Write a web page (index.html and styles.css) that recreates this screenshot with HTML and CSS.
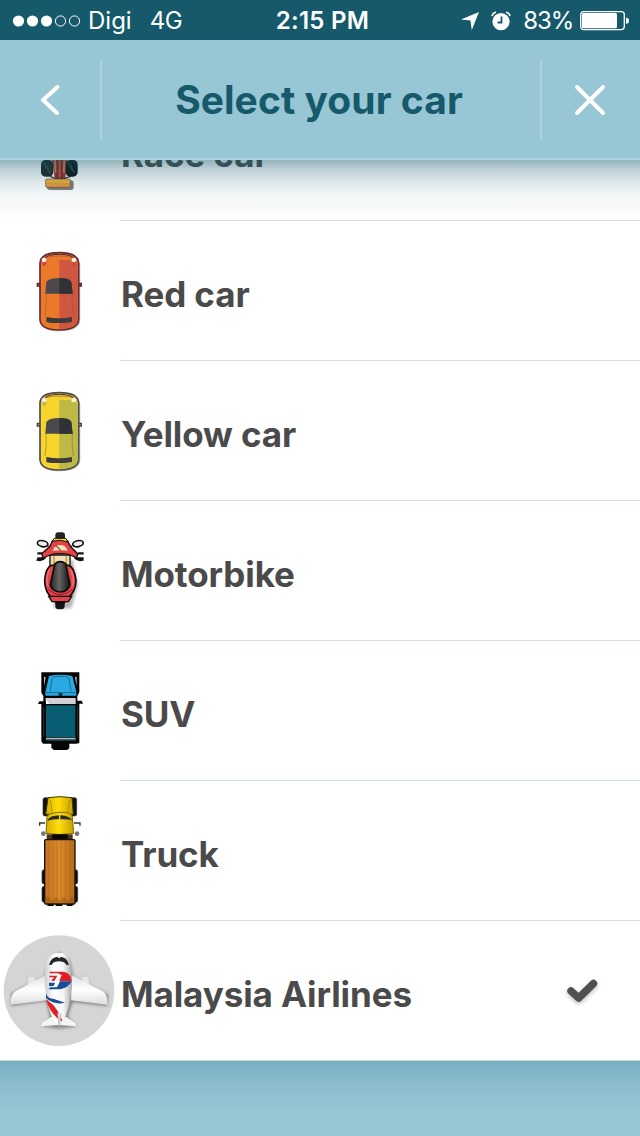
FILE: index.html
```html
<!DOCTYPE html>
<html lang="en">
<head>
  <meta charset="UTF-8" />
  <meta name="viewport" content="width=device-width, initial-scale=1.0"/>
  <title>Select your car</title>
  <link rel="stylesheet" href="styles.css">
</head>
<body>

  <div class="status">
    <div class="status-left">
      <svg class="signal" width="69" height="12" viewBox="0 0 69 12">
        <g fill="#fff"><circle cx="6.500" cy="6" r="5.6"/><circle cx="20.500" cy="6" r="5.6"/><circle cx="34.500" cy="6" r="5.6"/></g>
        <g fill="none" stroke="#fff"><circle cx="48.500" cy="6" r="5.1"/><circle cx="62.500" cy="6" r="5.1"/></g>
      </svg>
      <span class="carrier">Digi</span>
      <span class="network">4G</span>
    </div>
    <div class="clock">2:15 PM</div>
    <div class="status-right">
      <svg width="18" height="18" viewBox="0 0 18 18"><path d="M18 0 10.8 18 9.4 8.6 0 7.6Z" fill="#fff"/></svg>
      <svg class="alarm" width="20" height="20" viewBox="0 0 20 20">
        <circle cx="10" cy="10.6" r="8.6" fill="#fff"/>
        <path d="M1 5.2Q1.500 1.800 5 1.200M19 5.200Q18.500 1.800 15 1.200" fill="none" stroke="#fff" stroke-width="1.600"/>
        <path d="M10.500 5.500V11.500H6.500" fill="none" stroke="#15596b" stroke-width="1.800"/>
      </svg>
      <span class="percent">83%</span>
      <svg width="49" height="20" viewBox="0 0 49 20">
        <rect x=".7" y=".7" width="43.600" height="17.900" rx="3" fill="none" stroke="#fff" stroke-width="1.300"/>
        <rect x="2" y="2" width="35" height="15.300" rx="1.500" fill="#fff"/>
        <path d="M46 6.500Q49 7 49 9.700T46 13Z" fill="#fff"/>
      </svg>
    </div>
  </div>

  <header>
    <button class="nav-btn back" aria-label="Back">
      <svg width="20" height="32" viewBox="0 0 20 32"><path d="M17.500 3 3 16 17 29" fill="none" stroke="#fff" stroke-width="4" stroke-linecap="round" stroke-linejoin="round"/></svg>
    </button>
    <h1>Select your car</h1>
    <button class="nav-btn close" aria-label="Close">
      <svg width="32" height="32" viewBox="0 0 32 32"><path d="M3 3 29 29M29 3 3 29" stroke="#fff" stroke-width="4" stroke-linecap="round"/></svg>
    </button>
  </header>

  <main class="list">
    <div class="row">
      <svg class="icon" viewBox="0 -147 360 417">
        <rect x="141" y="151" width="80" height="29" rx="8" fill="#555" opacity=".75"/>
        <path d="M152 60H206L196 146H164Z" fill="#b0302a"/>
        <path d="M163 60 167 128M195 60 191 128" stroke="#ee7c2c" stroke-width="6"/>
        <path d="M172 70V145M186 70V145" stroke="#6b2140" stroke-width="4"/>
        <path d="M179 70V145" stroke="#dd4a22" stroke-width="5"/>
        <path d="M150 139 165 145H194L212 139" fill="none" stroke="#333" stroke-width="4"/>
        <rect x="123" y="90" width="37" height="50" rx="14" fill="#1c2426"/>
        <rect x="197" y="90" width="36" height="50" rx="14" fill="#0a1214"/>
        <path d="M134 102 150 128M208 102 222 126" stroke="#48575b" stroke-width="6" stroke-linecap="round" opacity=".6"/>
        <rect x="137" y="147" width="74" height="25" rx="4" fill="#ea9a38" stroke="#6b4630" stroke-width="2"/>
        <rect x="139" y="149" width="70" height="9" fill="#f0b13f"/>
      </svg>
      <span class="name">Race car</span>
    </div>

    <div class="row">
      <svg class="icon" viewBox="-60 -57 360 417">
        <use href="#car-shadow"/>
        <path d="M52 130H63V138H52ZM173 130H184V138H173Z" fill="#a64b48" stroke="#562431" stroke-width="4"/>
        <path d="M60 70Q61 38 118 38T176 70V238Q175 269 118 270T60 238Z" fill="#ec7829" stroke="#682b37" stroke-width="5"/>
        <path d="M118 41Q172 42 173 70V238Q172 266 118 267Z" fill="#cf5740"/>
        <path d="M118 60H151L160 76 171 72V62Q160 42 118 42Z" fill="#ec7829"/>
        <path d="M65 64 79 65Q80 76 70 78ZM171 64 157 65Q156 76 166 78Z" fill="#d33e38"/>
        <g id="car-details">
          <path d="M72 57Q81 43 118 43T164 57" fill="none" stroke="#443139" stroke-width="3"/>
          <path d="M77 53Q92 48 118 48T159 53" fill="none" stroke="#a35c33" stroke-width="2"/>
          <circle cx="72" cy="60" r="7" fill="#f5f2ed"/><circle cx="162" cy="60" r="7" fill="#f5f2ed"/>
          <path d="M78 158Q81 190 75 228M157 158Q154 190 160 228" fill="none" stroke="#7a5a24" stroke-width="2" opacity=".7"/>
          <path d="M76 161 79 126Q86 114 118 114T154 126L158 161Z" fill="#4b494b"/>
          <path d="M118 114Q149 114 154 126L158 161H118Z" fill="#323135"/>
          <path d="M79 231Q118 239 156 231V245Q152 248 118 249T79 245Z" fill="#3e3b3d"/>
        </g>
        <defs><path id="car-shadow" d="M65 76Q65 47 120 46T181 76V240Q180 272 123 274T64 242Z" fill="#555" opacity=".35"/></defs>
      </svg>
      <span class="name">Red car</span>
    </div>

    <div class="row">
      <svg class="icon" viewBox="-60 -57 360 417">
        <use href="#car-shadow"/>
        <path d="M52 130H63V138H52ZM173 130H184V138H173Z" fill="#bba83b" stroke="#45444a" stroke-width="4"/>
        <path d="M60 70Q61 38 118 38T176 70V238Q175 269 118 270T60 238Z" fill="#f5d52c" stroke="#4b4b52" stroke-width="5"/>
        <path d="M118 41Q172 42 173 70V238Q172 266 118 267Z" fill="#bcb947"/>
        <path d="M118 60H151L160 76 171 72V62Q160 42 118 42Z" fill="#f1d12f"/>
        <path d="M65 64 79 65Q80 76 70 78ZM171 64 157 65Q156 76 166 78Z" fill="#bbb64c"/>
        <use href="#car-details"/>
      </svg>
      <span class="name">Yellow car</span>
    </div>

    <div class="row">
      <svg class="icon" viewBox="-60 -57 360 417">
        <defs>
          <linearGradient id="seat"><stop offset="0" stop-color="#222"/><stop offset=".45" stop-color="#666"/><stop offset="1" stop-color="#111"/></linearGradient>
          <filter id="soft" x="-30%" y="-30%" width="160%" height="160%"><feGaussianBlur stdDeviation="5"/></filter>
        </defs>
        <path d="M90 120H158L174 195 154 265H103Z" fill="#777" opacity=".55" filter="url(#soft)"/>
        <rect x="106" y="37" width="29" height="35" rx="9" fill="#222"/>
        <rect x="106" y="235" width="28" height="33" rx="10" fill="#151515"/>
        <path d="M90 105H150V149H90Z" fill="#efe0b6" stroke="#111" stroke-width="4"/>
        <path d="M102 109V139M139 109V139" stroke="#d49c48" stroke-width="5"/>
        <path d="M86 77 98 87M155 77 143 87" stroke="#111" stroke-width="4"/>
        <ellipse cx="68" cy="71" rx="16" ry="9" transform="rotate(12 68 71)" fill="#eee" stroke="#111" stroke-width="5"/>
        <ellipse cx="174" cy="71" rx="16" ry="9" transform="rotate(-12 174 71)" fill="#eee" stroke="#111" stroke-width="5"/>
        <path d="M52 100H67M174 100H191M52 115H72M170 115H191" stroke="#161616" stroke-width="7"/>
        <path d="M50 118Q65 124 76 112M190 118Q174 124 164 112" fill="none" stroke="#111" stroke-width="7"/>
        <path d="M97 63Q120 50 143 63L151 79 173 101 170 114Q145 99 120 101 96 99 69 115L65 101 90 79Z" fill="#e74045" stroke="#17110f" stroke-width="4"/>
        <path d="M96 64 103 55H137L145 66Q120 57 96 64Z" fill="#eadf20" stroke="#111" stroke-width="3"/>
        <path d="M98 92Q104 75 121 75T143 92Q120 89 98 92Z" fill="#efe0bc"/>
        <path d="M108 77 122 91" stroke="#111" stroke-width="3"/>
        <path d="M95 136Q77 142 74 181 74 219 99 236L108 248H133L142 236Q168 216 168 181 163 141 146 136Z" fill="#e54249" stroke="#100c0b" stroke-width="5"/>
        <path d="M89 148Q75 174 83 198M151 148Q165 174 158 198" fill="none" stroke="#f26b6e" stroke-width="5"/>
        <path d="M105 131Q120 119 137 131L150 194Q144 214 121 216 94 214 91 194Z" fill="url(#seat)" stroke="#0a0a0a" stroke-width="5"/>
        <path d="M85 208Q120 240 157 208" fill="none" stroke="#8d1e29" stroke-width="3"/>
        <path d="M86 229H155L145 245H96Z" fill="#e54249" stroke="#100c0b" stroke-width="4"/>
      </svg>
      <span class="name">Motorbike</span>
    </div>

    <div class="row">
      <svg class="icon" viewBox="-60 -57 360 417">
        <path d="M64 37H178V96L172 109V122H185L189 131H178V249L169 251H148V265L141 270H101L94 263V251H69L64 244V132H54L58 124H70V108L64 98Z" fill="#050505"/>
        <path d="M77 52 72 78V50ZM165 52 170 78V50Z" fill="#b9c4c8"/>
        <path d="M87 48Q120 40 157 48L169 96V107H76V97Z" fill="#2baae2"/>
        <path d="M91 94 96 57Q98 50 108 49H134Q144 50 147 57L153 94" fill="none" stroke="#176c94" stroke-width="3"/>
        <path d="M76 98H169" stroke="#126b92" stroke-width="3"/>
        <rect x="116" y="99" width="11" height="9" fill="#063345"/>
        <path d="M76 114H167V132H87Z" fill="#d0cfd1"/>
        <path d="M77 115 89 132H78Z" fill="#fff"/>
        <rect x="78" y="136" width="88" height="96" fill="#085d72"/>
        <path d="M71 140V230M173 140V230" stroke="#3a4244" stroke-width="2"/>
        <path d="M78 236H167" stroke="#b0b8ba" stroke-width="5"/>
        <path d="M78 241H167" stroke="#0e4c60" stroke-width="3"/>
      </svg>
      <span class="name">SUV</span>
    </div>

    <div class="row">
      <svg class="icon" viewBox="-60 -27 360 417">
        <defs>
          <linearGradient id="cargo"><stop offset="0" stop-color="#c0751f"/><stop offset=".5" stop-color="#dc8a2a"/><stop offset="1" stop-color="#b5681c"/></linearGradient>
          <linearGradient id="cab"><stop offset="0" stop-color="#d7ae00"/><stop offset=".45" stop-color="#ffde08"/><stop offset="1" stop-color="#c7a000"/></linearGradient>
        </defs>
        <g fill="#111" stroke="#333" stroke-width="2">
          <rect x="69" y="23" width="18" height="55" rx="6"/><rect x="150" y="23" width="20" height="55" rx="6"/>
          <rect x="66" y="239" width="15" height="43" rx="6"/><rect x="159" y="239" width="14" height="43" rx="6"/>
          <rect x="66" y="289" width="15" height="48" rx="6"/><rect x="159" y="289" width="14" height="48" rx="6"/>
        </g>
        <path d="M84 23Q120 17 156 23L160 73H77Z" fill="url(#cab)" stroke="#3d3400" stroke-width="3"/>
        <path d="M91 30 97 70M149 30 142 70" stroke="#b59600" stroke-width="3"/>
        <path d="M81 80Q84 69 120 67T157 80L161 130Q120 137 78 130Z" fill="url(#cab)" stroke="#806900" stroke-width="3"/>
        <path d="M83 90Q90 77 117 76V88Q98 86 83 92ZM121 76Q148 77 156 91 142 86 121 88Z" fill="#292a2a"/>
        <path d="M101 98H137" stroke="#e6d77b" stroke-width="2"/>
        <path d="M59 107V99H75M180 107V99H162" fill="none" stroke="#333" stroke-width="4"/>
        <circle cx="70" cy="131" r="7" fill="#777"/><circle cx="171" cy="131" r="7" fill="#777"/>
        <rect x="80" y="133" width="78" height="16" fill="#46301c"/>
        <rect x="97" y="133" width="46" height="15" fill="#080808"/>
        <path d="M82 341H101V348H82ZM107 341H127V348H107ZM140 341H158V348H140Z" fill="#080808"/>
        <rect x="74" y="149" width="91" height="193" rx="3" fill="url(#cargo)" stroke="#17120b" stroke-width="4"/>
        <path d="M87 157V325M99 153V335M111 153V335M123 153V335M136 153V335M149 157V325" stroke="#b06a1e" stroke-width="2"/>
        <path d="M78 325Q84 313 90 325T102 327 114 327 126 327 138 327 150 325 161 324V339H78Z" fill="#7e430f" opacity=".35"/>
      </svg>
      <span class="name">Truck</span>
    </div>

    <div class="row">
      <svg class="icon" viewBox="0 -27 360 417">
        <defs>
          <linearGradient id="body"><stop offset="0" stop-color="#ccc"/><stop offset=".35" stop-color="#fff"/><stop offset=".7" stop-color="#f4f4f4"/><stop offset="1" stop-color="#aaa"/></linearGradient>
          <linearGradient id="wing" x2="0" y2="1"><stop offset="0" stop-color="#e2e2e2"/><stop offset=".5" stop-color="#fff"/><stop offset="1" stop-color="#ddd"/></linearGradient>
        </defs>
        <circle cx="177" cy="182" r="166" fill="#d5d5d5"/>
        <path d="M34 190 132 140 145 92 177 65 210 93 220 140 325 194 322 228 218 217 204 260 230 289 178 296 126 289 150 262 138 214 32 228Z" fill="#555" opacity=".6" filter="url(#soft)"/>
        <rect x="82" y="138" width="24" height="30" rx="7" fill="#e5e5e5" stroke="#bbb" stroke-width="2"/>
        <rect x="245" y="138" width="24" height="30" rx="7" fill="#e5e5e5" stroke="#bbb" stroke-width="2"/>
        <path d="M136 136 46 184Q32 192 31 224L140 211ZM216 136 308 184Q322 192 323 224L213 211Z" fill="url(#wing)"/>
        <path d="M153 261 126 278 124 289 176 285 229 289 226 278 199 261Z" fill="#f4f4f4"/>
        <path d="M133 120Q139 69 177 68T215 120Q218 207 197 258 188 281 178 287 165 282 154 256 132 204 133 120Z" fill="url(#body)"/>
        <path d="M147 105Q152 80 177 80T207 105L199 104Q192 94 177 94T155 104Z" fill="#20282c"/>
        <path d="M174 80H181V84H174Z" fill="#eee"/>
        <path d="M149 125H190Q212 128 215 153H178L185 135 173 130H149ZM148 137H172L163 153H154L162 142H148Z" fill="#e31c24"/>
        <path d="M215 154Q204 174 180 178H145L151 172H171L180 154ZM147 158H165L161 168H147Z" fill="#174c9d"/>
        <path d="M138 190Q144 208 160 206L195 218Q162 226 138 204Z" fill="#1b4b9b"/>
        <path d="M138 208 160 225Q179 248 187 273L181 272Q149 249 138 208Z" fill="#dd2025"/>
        <path d="M173 250 178 297 183 250" fill="#e0e0e0" stroke="#aaa" stroke-width="2"/>
      </svg>
      <span class="name">Malaysia Airlines</span>
      <svg class="check" width="36" height="30" viewBox="0 0 36 30"><path d="M6 14 13.700 21 28.500 6.500" fill="none" stroke="#505050" stroke-width="7.500" stroke-linecap="round" stroke-linejoin="round"/></svg>
    </div>
  </main>

  <footer></footer>

</body>
</html>
```
FILE: styles.css
```css
* {
  box-sizing: border-box;
}

body {
  margin: 0;
  height: 1136px;
  display: flex;
  flex-direction: column;
  overflow: hidden;
  background: #fff;
  font-family: Inter, "Liberation Sans", sans-serif;
}

svg {
  display: block;
  flex: none;
}

.status {
  height: 40px;
  flex: none;
  display: grid;
  grid-template-columns: 1fr auto 1fr;
  align-items: center;
  padding: 1px 11px 0 12px;
  background: #15596b;
  color: #fff;
  font-size: 24px;
  line-height: 39px;
}

.status-left,
.status-right {
  display: flex;
  align-items: center;
}

.status-right {
  justify-content: flex-end;
}

.carrier {
  margin-left: 7px;
}

.network {
  margin-left: 18px;
  letter-spacing: -0.4px;
}

.clock {
  padding-left: 4px;
  font-weight: 600;
  letter-spacing: 0.3px;
}

.alarm {
  margin-left: 12px;
}

.percent {
  margin: 0 7px 0 12px;
  letter-spacing: -1.2px;
}

header {
  height: 120px;
  flex: none;
  display: flex;
  align-items: center;
  padding-top: 2px;
  background: #97c6d4;
  border-bottom: 2px solid #add2de;
  position: relative;
  z-index: 1;
}

header::after {
  content: "";
  position: absolute;
  top: 120px;
  left: 0;
  right: 0;
  height: 60px;
  background: linear-gradient(rgba(21, 89, 107, 0.46), rgba(21, 89, 107, 0.28) 10px, rgba(21, 89, 107, 0.13) 23px, rgba(21, 89, 107, 0.05) 36px, rgba(21, 89, 107, 0));
}

h1 {
  flex: 1;
  margin: 0;
  padding-right: 4px;
  text-align: center;
  font-size: 39px;
  font-weight: 700;
  letter-spacing: 0.05px;
  line-height: 80px;
  color: #15596b;
}

.nav-btn {
  width: 102px;
  height: 80px;
  padding: 0;
  display: flex;
  align-items: center;
  justify-content: center;
  border: 0;
  background: none;
}

.back {
  border-right: 2px solid #add2de;
}

.close {
  width: 100px;
  padding-right: 2px;
  border-left: 2px solid #add2de;
}

.list {
  height: 901px;
  flex: none;
  overflow: hidden;
  display: flex;
  flex-direction: column;
  justify-content: flex-end;
}

.row {
  height: 140px;
  flex: none;
  display: flex;
  align-items: center;
  background: linear-gradient(#cfdfe3, #cfdfe3) 120px 100% / 520px 1px no-repeat;
}

.row:last-child {
  background: none;
  border-bottom: 1px solid #cbdadf;
}

.icon {
  width: 120px;
  height: 139px;
  align-self: flex-start;
}

.name {
  flex: 1;
  padding: 6px 0 0 1px;
  font-size: 35px;
  font-weight: 700;
  letter-spacing: -0.1px;
  color: #4a4a4a;
}

.check {
  margin: 3px 39px 0 0;
  filter: drop-shadow(0 2px 2px rgba(0, 0, 0, 0.25));
}

footer {
  flex: 1;
  background: linear-gradient(#76afc2, #8bbdcd 22px, #97c6d4 52px);
}
```
